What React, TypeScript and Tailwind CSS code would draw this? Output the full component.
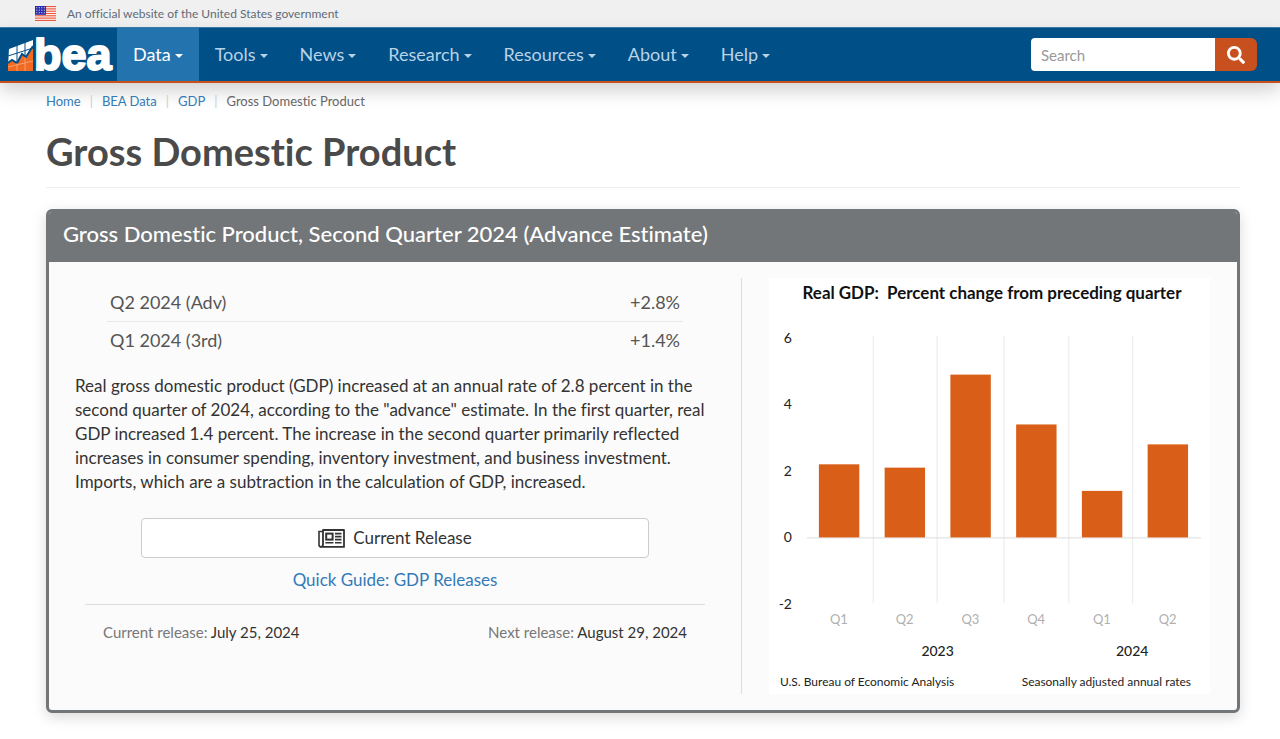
import React from 'react';
import { FaSearch } from 'react-icons/fa';

const navItems = ['Data', 'Tools', 'News', 'Research', 'Resources', 'About', 'Help'];

const crumbs = ['Home', 'BEA Data', 'GDP'];

const rates = [
  { label: 'Q2 2024 (Adv)', value: '+2.8%' },
  { label: 'Q1 2024 (3rd)', value: '+1.4%' },
];

const bars = [
  { quarter: 'Q1', value: 2.2 },
  { quarter: 'Q2', value: 2.1 },
  { quarter: 'Q3', value: 4.9 },
  { quarter: 'Q4', value: 3.4 },
  { quarter: 'Q1', value: 1.4 },
  { quarter: 'Q2', value: 2.8 },
];

const Flag = () => (
  <svg width="21" height="15" viewBox="0 0 21 15" aria-hidden="true">
    <rect width="21" height="15" fill="#fff" />
    {[0, 2.3, 4.6, 6.9, 9.2, 11.5, 13.8].map((y) => (
      <rect key={y} y={y} width="21" height="1.2" fill="#e8583c" />
    ))}
    <rect width="11" height="8.8" fill="#2a2ba8" />
    {[1.7, 4.2, 6.7].map((y) =>
      [1.8, 4.3, 6.8, 9.3].map((x) => <circle key={`${x}-${y}`} cx={x} cy={y} r="0.6" fill="#cfd2f2" />)
    )}
  </svg>
);

const Logo = () => (
  <svg width="108" height="53" viewBox="0 -8 108 53" role="img" aria-label="bea">
    <path d="M1 13 25 4V30L0 30Z" fill="#fff" />
    <path d="M0 27 4 24 9 27 14 18 18 21 25 10V35H0Z" fill="#f26a21" />
    <path d="M0 27 4 24 9 27 14 18 18 21 25 10" fill="none" stroke="#004f87" strokeWidth="2" />
    <path d="M9 9V26M17 6V20M0 20 25 12" stroke="#004f87" strokeWidth="1" />
    <path d="M9 27V35M17 21V35M0 31 25 25" stroke="#f9b48c" strokeWidth="0.7" />
    <text
      x="26"
      y="34"
      fontSize="45"
      fontWeight="700"
      fill="#fff"
      stroke="#fff"
      strokeWidth="2"
      strokeLinejoin="round"
      fontFamily="Liberation Sans, sans-serif"
    >
      bea
    </text>
  </svg>
);

const NewspaperIcon = () => (
  <svg width="27" height="19" viewBox="0 0 27 19" fill="none" stroke="#333" aria-hidden="true">
    <path d="M5 1H26V17.9H3Q5 17.5 5 15.5Z" strokeWidth="1.8" strokeLinejoin="round" />
    <path d="M5 2.5H1V15.5Q1 17.9 3 17.9" strokeWidth="1.6" />
    <rect x="8.2" y="4.6" width="6.4" height="6" strokeWidth="2" />
    <path d="M17 4.6H23.5M17 7.6H23.5M17 10.6H23.5M7.4 13.8H15.4M17 13.8H23.5" strokeWidth="1.6" />
  </svg>
);

const GdpChart = () => {
  const zero = 260;
  const unit = 33.3;

  return (
    <svg viewBox="0 0 442 417" className="w-full bg-white" fontFamily="Lato, sans-serif" role="img" aria-label="Real GDP">
      <text x="223.5" y="21" textAnchor="middle" fontSize="17" fontWeight="700" fill="#111" xmlSpace="preserve">
        {'Real GDP:  Percent change from preceding quarter'}
      </text>
      {[6, 4, 2, 0, -2].map((n) => (
        <text key={n} x="23" y={zero - n * unit + 5} textAnchor="end" fontSize="14" fill="#222">
          {n}
        </text>
      ))}
      {[104.5, 168.5, 235.5, 300.5, 364.5].map((x) => (
        <line key={x} x1={x} x2={x} y1="58" y2="326" stroke="#e9e9e9" />
      ))}
      <line x1="38" x2="433" y1="260.5" y2="260.5" stroke="#dcdcdc" />
      {bars.map((bar, i) => (
        <g key={i}>
          <rect x={50 + i * 65.9} y={zero - bar.value * unit} width="40.5" height={bar.value * unit} fill="#d95f18" />
          <text x={70 + i * 65.9} y="347" textAnchor="middle" fontSize="13" fill="#b0b0b0">
            {bar.quarter}
          </text>
        </g>
      ))}
      <text x="169" y="379" textAnchor="middle" fontSize="14" fontWeight="500" fill="#222">2023</text>
      <text x="364" y="379" textAnchor="middle" fontSize="14" fontWeight="500" fill="#222">2024</text>
      <text x="11" y="409" fontSize="12" fill="#222">U.S. Bureau of Economic Analysis</text>
      <text x="423" y="409" textAnchor="end" fontSize="12" fill="#222">Seasonally adjusted annual rates</text>
    </svg>
  );
};

const Header = () => (
  <header>
    <div className="flex h-[27px] items-center gap-[11px] bg-[#f0f0f0] pl-[35px] text-xs text-[#5f6b78]">
      <Flag />
      <span>An official website of the United States government</span>
    </div>
    <nav className="flex items-stretch justify-between border-t border-b-2 border-t-[#3a78a8] border-b-[#c8501e] bg-[#004f87] shadow-[0_8px_18px_rgba(0,0,0,0.18)]">
      <div className="flex">
        <a href="#" className="flex items-center pr-px pl-2">
          <Logo />
        </a>
        {navItems.map((item) => (
          <a
            key={item}
            href="#"
            className={`flex h-[53px] items-center gap-1 px-4 pb-0.5 text-lg ${
              item === 'Data' ? 'bg-[#2374ae] text-white' : 'text-[#b9d3e6]'
            }`}
          >
            {item}
            <span className="mt-1 border-x-4 border-t-4 border-x-transparent border-t-current" />
          </a>
        ))}
      </div>
      <form className="flex items-center pr-[23px]">
        <input
          type="text"
          aria-label="Search"
          placeholder="Search"
          className="h-[33px] w-[184px] rounded-l bg-white px-[10px] text-[15px] text-[#555] outline-none placeholder:text-[#999]"
        />
        <button
          type="button"
          aria-label="Submit search"
          className="flex h-[33px] w-[42px] items-center justify-center rounded-r-md bg-[#c8501e] text-lg text-white"
        >
          <FaSearch />
        </button>
      </form>
    </nav>
  </header>
);

const ReleaseCard = () => (
  <section className="mt-[21px] overflow-hidden rounded-md border-[3px] border-[#727679] bg-[#fbfbfb] shadow-[0_4px_14px_rgba(0,0,0,0.15)]">
    <h2 className="bg-[#727679] px-[14px] pt-[6px] pb-3 text-[22px] leading-8 font-medium text-white">
      Gross Domestic Product, Second Quarter 2024 (Advance Estimate)
    </h2>
    <div className="flex py-4">
      <div className="w-7/12 border-r border-[#ddd] px-[26px] pt-[6px]">
        <div className="px-8">
          <table className="w-full text-lg text-[#555]">
            <tbody>
              {rates.map((row) => (
                <tr key={row.label} className="h-[37px] border-b border-[#e8e8e8] last:border-0">
                  <td className="px-[3px]">{row.label}</td>
                  <td className="px-[3px] text-right">{row.value}</td>
                </tr>
              ))}
            </tbody>
          </table>
        </div>
        <p className="mt-4 text-[17px] leading-6 text-[#333]">
          Real gross domestic product (GDP) increased at an annual rate of 2.8 percent in the second quarter of 2024,
          according to the "advance" estimate. In the first quarter, real GDP increased 1.4 percent. The increase in
          the second quarter primarily reflected increases in consumer spending, inventory investment, and business
          investment. Imports, which are a subtraction in the calculation of GDP, increased.
        </p>
        <div className="mt-6 px-[66px]">
          <button
            type="button"
            className="flex h-10 w-full items-center justify-center gap-2 rounded border border-[#ccc] bg-white text-[17px] text-[#333]"
          >
            <NewspaperIcon />
            Current Release
          </button>
          <a href="#" className="mt-[10px] block text-center text-[17px] leading-6 text-[#337ab7]">
            Quick Guide: GDP Releases
          </a>
        </div>
        <div className="mx-[10px] mt-3 flex justify-between border-t border-[#ddd] px-[18px] pt-[15px] text-[15px] leading-6 text-[#777]">
          <p>
            Current release: <span className="text-[#333]">July 25, 2024</span>
          </p>
          <p>
            Next release: <span className="text-[#333]">August 29, 2024</span>
          </p>
        </div>
      </div>
      <div className="w-5/12 px-[27px]">
        <GdpChart />
      </div>
    </div>
  </section>
);

export default function App() {
  return (
    <div className="min-h-screen bg-white font-[Lato,sans-serif] [font-variant-ligatures:none]">
      <Header />
      <main className="pr-10 pb-6 pl-[46px]">
        <ol className="flex pt-2 text-[13px] leading-5 text-[#666]">
          {crumbs.map((crumb) => (
            <li key={crumb}>
              <a href="#" className="text-[#337ab7]">
                {crumb}
              </a>
              <span className="px-[9px] text-[#ccc]">|</span>
            </li>
          ))}
          <li>Gross Domestic Product</li>
        </ol>
        <h1 className="mt-4 border-b border-[#eee] pb-3 text-[38px] leading-12 font-bold text-[#4a4a4a]">
          Gross Domestic Product
        </h1>
        <ReleaseCard />
      </main>
    </div>
  );
}
